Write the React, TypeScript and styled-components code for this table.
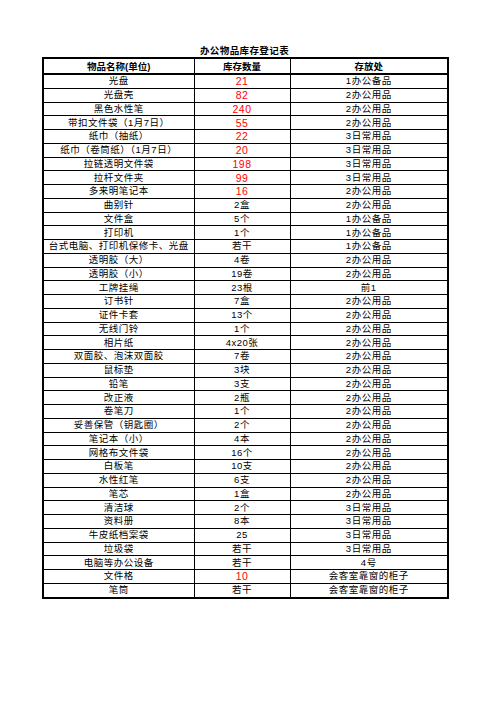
import React from 'react';
import styled, { createGlobalStyle } from 'styled-components';

const GlobalStyle = createGlobalStyle`
  html, body {
    margin: 0;
    padding: 0;
    background: #fff;
  }
  body {
    font-family: "Liberation Sans", "Noto Sans CJK SC", sans-serif;
    color: #000;
  }
`;

type Row = [string, string, string, boolean?];

const rows: Row[] = [
  ['光盘', '21', '1办公备品', true],
  ['光盘壳', '82', '2办公用品', true],
  ['黑色水性笔', '240', '2办公用品', true],
  ['带扣文件袋（1月7日）', '55', '2办公用品', true],
  ['纸巾（抽纸）', '22', '3日常用品', true],
  ['纸巾（卷筒纸）（1月7日）', '20', '3日常用品', true],
  ['拉链透明文件袋', '198', '3日常用品', true],
  ['拉杆文件夹', '99', '3日常用品', true],
  ['多来明笔记本', '16', '2办公用品', true],
  ['曲别针', '2盒', '2办公用品'],
  ['文件盒', '5个', '1办公备品'],
  ['打印机', '1个', '1办公备品'],
  ['台式电脑、打印机保修卡、光盘', '若干', '1办公备品'],
  ['透明胶（大）', '4卷', '2办公用品'],
  ['透明胶（小）', '19卷', '2办公用品'],
  ['工牌挂绳', '23根', '前1'],
  ['订书针', '7盒', '2办公用品'],
  ['证件卡套', '13个', '2办公用品'],
  ['无线门铃', '1个', '2办公用品'],
  ['相片纸', '4x20张', '2办公用品'],
  ['双面胶、泡沫双面胶', '7卷', '2办公用品'],
  ['鼠标垫', '3块', '2办公用品'],
  ['铅笔', '3支', '2办公用品'],
  ['改正液', '2瓶', '2办公用品'],
  ['卷笔刀', '1个', '2办公用品'],
  ['妥善保管（钥匙圈）', '2个', '2办公用品'],
  ['笔记本（小）', '4本', '2办公用品'],
  ['网格布文件袋', '16个', '2办公用品'],
  ['白板笔', '10支', '2办公用品'],
  ['水性红笔', '6支', '2办公用品'],
  ['笔芯', '1盒', '2办公用品'],
  ['清洁球', '2个', '3日常用品'],
  ['资料册', '8本', '3日常用品'],
  ['牛皮纸档案袋', '25', '3日常用品'],
  ['垃圾袋', '若干', '3日常用品'],
  ['电脑等办公设备', '若干', '4号'],
  ['文件格', '10', '会客室靠窗的柜子', true],
  ['笔筒', '若干', '会客室靠窗的柜子'],
];

const Sheet = styled.div`
  padding: 44px 0 0 42px;
  width: 405px;
`;

const Title = styled.div`
  height: 13px;
  line-height: 13px;
  font-size: 9.5px;
  font-weight: bold;
  text-align: center;
  letter-spacing: 0.4px;
`;

const Table = styled.table`
  border-collapse: collapse;
  table-layout: fixed;
  width: 405px;
  border: 2px solid #000;
`;

const HeadCell = styled.th`
  border: 1px solid #000;
  border-bottom: 2px solid #000;
  height: 14px;
  padding: 0;
  font-size: 9.5px;
  font-weight: bold;
  line-height: 13px;
  text-align: center;
  white-space: nowrap;
`;

const Cell = styled.td<{ $red?: boolean }>`
  border: 1px solid #000;
  height: 12.75px;
  padding: 0;
  line-height: 12px;
  text-align: center;
  white-space: nowrap;
  letter-spacing: 0.5px;
  color: ${(p) => (p.$red ? '#ff0000' : '#000')};
  font-size: ${(p) => (p.$red ? '10.5px' : '9.5px')};
`;

const App: React.FC = () => {
  return (
    <>
      <GlobalStyle />
      <Sheet>
        <Title>办公物品库存登记表</Title>
        <Table>
          <colgroup>
            <col style={{ width: 151 }} />
            <col style={{ width: 96 }} />
            <col style={{ width: 158 }} />
          </colgroup>
          <thead>
            <tr>
              <HeadCell>物品名称(单位)</HeadCell>
              <HeadCell>库存数量</HeadCell>
              <HeadCell>存放处</HeadCell>
            </tr>
          </thead>
          <tbody>
            {rows.map(([name, qty, place, red]) => (
              <tr key={name}>
                <Cell>{name}</Cell>
                <Cell $red={red}>{qty}</Cell>
                <Cell>{place}</Cell>
              </tr>
            ))}
          </tbody>
        </Table>
      </Sheet>
    </>
  );
};

export default App;
